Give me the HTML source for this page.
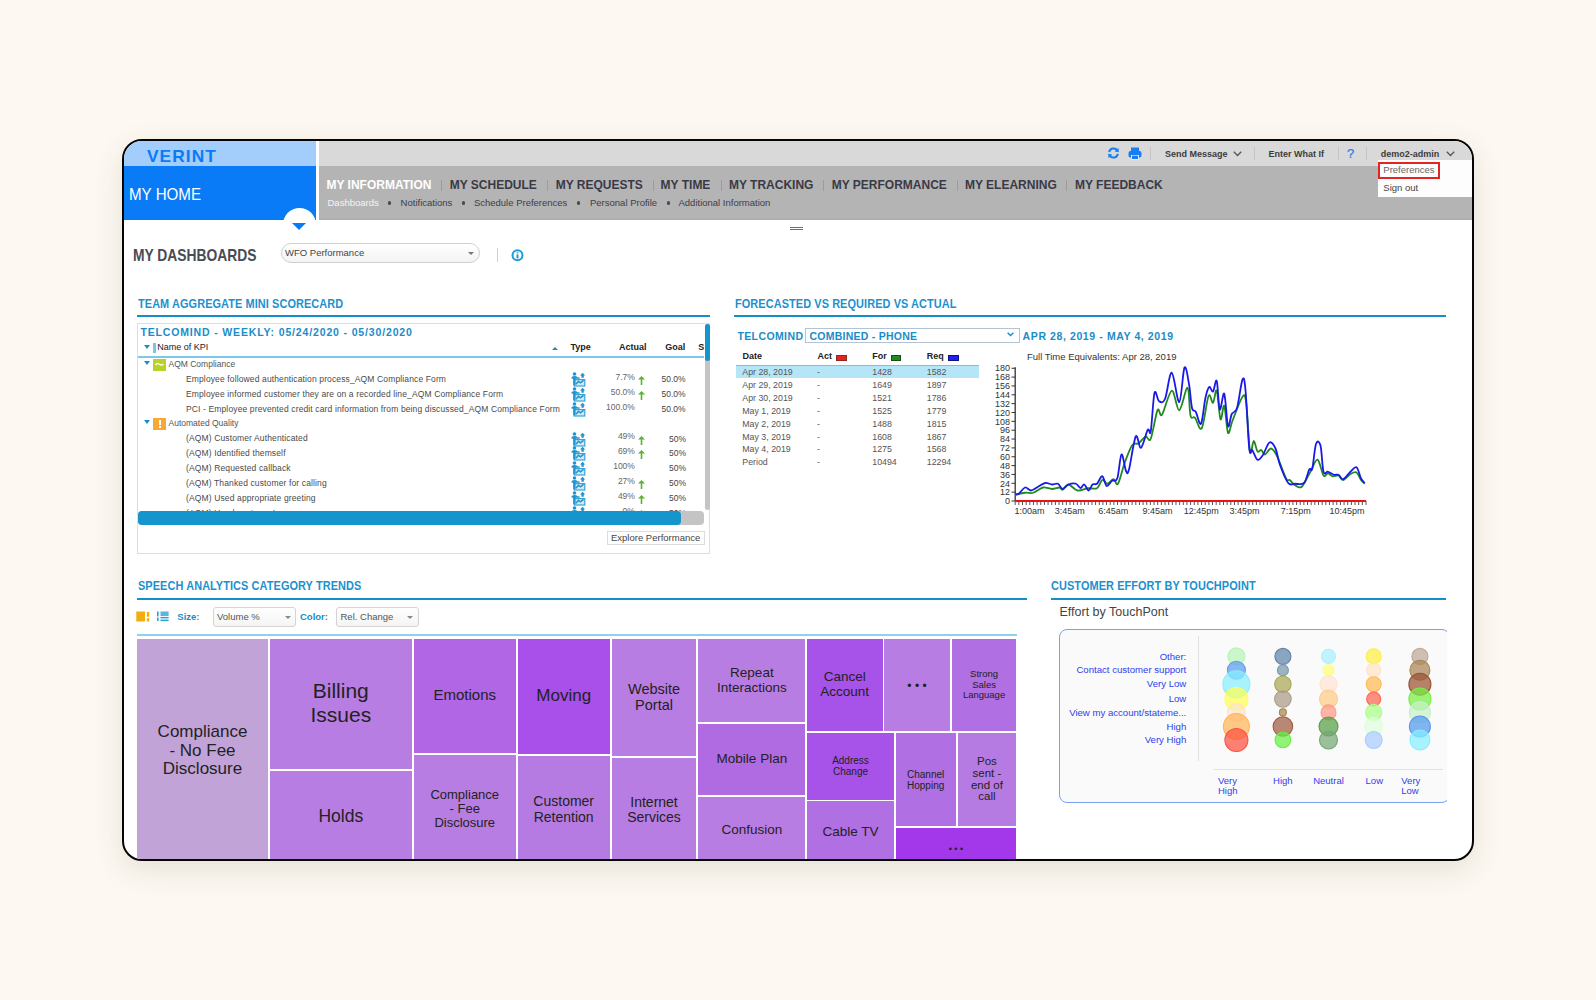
<!DOCTYPE html>
<html><head><meta charset="utf-8">
<style>
*{box-sizing:border-box;margin:0;padding:0}
html,body{width:1596px;height:1000px;overflow:hidden;background:#fdf8f1;font-family:"Liberation Sans",sans-serif}
.a{position:absolute;white-space:nowrap}
#frame{position:absolute;left:122px;top:139px;width:1352px;height:722px;border:2px solid #050505;border-radius:20px;overflow:hidden;background:#fff;box-shadow:0 9px 30px rgba(60,55,35,0.12)}
#in{position:absolute;left:-124px;top:-141px;width:1596px;height:1000px}
svg{position:absolute;overflow:visible}
</style></head><body>
<div id="frame"><div id="in">

<div class="a" style="left:124px;top:141px;width:192px;height:25px;background:#a3cdfa;"></div>
<div class="a" style="left:124px;top:166px;width:192px;height:54px;background:#0a7bf7;"></div>
<div class="a" style="left:319px;top:141px;width:1153px;height:25px;background:#d9d9d9;"></div>
<div class="a" style="left:319px;top:166px;width:1153px;height:54px;background:#b4b4b4;"></div>
<div class="a" style="left:319px;top:217.5px;width:1153px;height:2.5px;background:#aeaeae;"></div>
<div class="a" style="left:282.5px;top:208px;width:33px;height:33px;border-radius:50%;background:#fff"></div>
<div class="a" style="left:292px;top:223px;width:0;height:0;border-left:7.5px solid transparent;border-right:7.5px solid transparent;border-top:7px solid #0a7bf7"></div>
<div class="a" style="left:147px;top:147.99px;font-size:16.2px;line-height:16.2px;color:#0a7bf7;font-weight:bold;letter-spacing:1px;transform:scaleX(1.07);transform-origin:0 0;">VERINT</div>
<div class="a" style="left:129px;top:185.91px;font-size:17px;line-height:17px;color:#fff;font-weight:normal;transform:scaleX(0.89);transform-origin:0 0;">MY HOME</div>
<div class="a" style="left:326.5px;top:178.64px;font-size:12px;line-height:12px;color:#fff;font-weight:bold;">MY INFORMATION</div>
<div class="a" style="left:449.7px;top:178.64px;font-size:12px;line-height:12px;color:#3a3a46;font-weight:bold;">MY SCHEDULE</div>
<div class="a" style="left:555.7px;top:178.64px;font-size:12px;line-height:12px;color:#3a3a46;font-weight:bold;">MY REQUESTS</div>
<div class="a" style="left:660.6px;top:178.64px;font-size:12px;line-height:12px;color:#3a3a46;font-weight:bold;">MY TIME</div>
<div class="a" style="left:729px;top:178.64px;font-size:12px;line-height:12px;color:#3a3a46;font-weight:bold;">MY TRACKING</div>
<div class="a" style="left:831.7px;top:178.64px;font-size:12px;line-height:12px;color:#3a3a46;font-weight:bold;">MY PERFORMANCE</div>
<div class="a" style="left:965px;top:178.64px;font-size:12px;line-height:12px;color:#3a3a46;font-weight:bold;">MY ELEARNING</div>
<div class="a" style="left:1075px;top:178.64px;font-size:12px;line-height:12px;color:#3a3a46;font-weight:bold;">MY FEEDBACK</div>
<div class="a" style="left:441.3px;top:180px;width:1.0px;height:11px;background:#9c9c9c;"></div>
<div class="a" style="left:546.5px;top:180px;width:1.0px;height:11px;background:#9c9c9c;"></div>
<div class="a" style="left:652.5px;top:180px;width:1.0px;height:11px;background:#9c9c9c;"></div>
<div class="a" style="left:720.8px;top:180px;width:1.0px;height:11px;background:#9c9c9c;"></div>
<div class="a" style="left:822.7px;top:180px;width:1.0px;height:11px;background:#9c9c9c;"></div>
<div class="a" style="left:956.6px;top:180px;width:1.0px;height:11px;background:#9c9c9c;"></div>
<div class="a" style="left:1066px;top:180px;width:1px;height:11px;background:#9c9c9c;"></div>
<div class="a" style="left:327.5px;top:197.96px;font-size:9.5px;line-height:9.5px;color:#f4f4f4;font-weight:normal;">Dashboards</div>
<div class="a" style="left:400.6px;top:197.96px;font-size:9.5px;line-height:9.5px;color:#3d3d4a;font-weight:normal;">Notifications</div>
<div class="a" style="left:473.9px;top:197.96px;font-size:9.5px;line-height:9.5px;color:#3d3d4a;font-weight:normal;">Schedule Preferences</div>
<div class="a" style="left:590px;top:197.96px;font-size:9.5px;line-height:9.5px;color:#3d3d4a;font-weight:normal;">Personal Profile</div>
<div class="a" style="left:678.5px;top:197.96px;font-size:9.5px;line-height:9.5px;color:#3d3d4a;font-weight:normal;">Additional Information</div>
<div class="a" style="left:387.5px;top:201.2px;width:3.4px;height:3.4px;border-radius:50%;background:#4a4a55"></div>
<div class="a" style="left:461.5px;top:201.2px;width:3.4px;height:3.4px;border-radius:50%;background:#4a4a55"></div>
<div class="a" style="left:577.1px;top:201.2px;width:3.4px;height:3.4px;border-radius:50%;background:#4a4a55"></div>
<div class="a" style="left:666.5px;top:201.2px;width:3.4px;height:3.4px;border-radius:50%;background:#4a4a55"></div>
<svg style="left:1107px;top:147px" width="13" height="12" viewBox="0 0 13 12">
<path d="M2.2 5.2 A4.4 4.4 0 0 1 10.2 3.4" fill="none" stroke="#1a7ef0" stroke-width="2"/>
<path d="M11.5 0.8 L11.8 5.2 L7.6 4.4 Z" fill="#1a7ef0"/>
<path d="M10.8 6.8 A4.4 4.4 0 0 1 2.8 8.6" fill="none" stroke="#1a7ef0" stroke-width="2"/>
<path d="M1.5 11.2 L1.2 6.8 L5.4 7.6 Z" fill="#1a7ef0"/>
</svg>
<svg style="left:1127.5px;top:147px" width="14" height="13" viewBox="0 0 14 13">
<rect x="3" y="0.5" width="8" height="4" fill="#1a7ef0"/>
<rect x="0.5" y="4" width="13" height="6.5" rx="2" fill="#1a7ef0"/>
<rect x="3" y="8" width="8" height="4.5" fill="#fff"/>
<rect x="3.8" y="8.6" width="6.4" height="3.4" fill="#1a7ef0"/>
</svg>
<div class="a" style="left:1150px;top:147px;width:1px;height:13px;background:#c4c4c4;"></div>
<div class="a" style="left:1165px;top:149.58px;font-size:9px;line-height:9px;color:#3c3c3c;font-weight:bold;">Send Message</div>
<svg style="left:1233px;top:151px" width="9" height="6" viewBox="0 0 9 6"><path d="M0.8 0.8 L4.5 4.5 L8.2 0.8" fill="none" stroke="#555" stroke-width="1.3"/></svg>
<div class="a" style="left:1254px;top:147px;width:1px;height:13px;background:#c4c4c4;"></div>
<div class="a" style="left:1268.5px;top:149.58px;font-size:9px;line-height:9px;color:#3c3c3c;font-weight:bold;">Enter What If</div>
<div class="a" style="left:1338px;top:147px;width:1px;height:13px;background:#c4c4c4;"></div>
<div class="a" style="left:1347px;top:146.60px;font-size:13px;line-height:13px;color:#1a7ef0;font-weight:normal;-webkit-text-stroke:0.2px #1a7ef0;">?</div>
<div class="a" style="left:1366px;top:147px;width:1px;height:13px;background:#c4c4c4;"></div>
<div class="a" style="left:1380.8px;top:149.58px;font-size:9px;line-height:9px;color:#3c3c3c;font-weight:bold;">demo2-admin</div>
<svg style="left:1446px;top:151px" width="9" height="6" viewBox="0 0 9 6"><path d="M0.8 0.8 L4.5 4.5 L8.2 0.8" fill="none" stroke="#555" stroke-width="1.3"/></svg>
<div class="a" style="left:1378px;top:160px;width:94px;height:37px;background:#fdfdfd;"></div>
<div class="a" style="left:1378px;top:161.5px;width:62px;height:17px;border:2px solid #e52421"></div>
<div class="a" style="left:1383.3px;top:165.16px;font-size:9.5px;line-height:9.5px;color:#666;font-weight:normal;">Preferences</div>
<div class="a" style="left:1383.3px;top:183.36px;font-size:9.5px;line-height:9.5px;color:#444;font-weight:normal;">Sign out</div>
<div class="a" style="left:790px;top:227px;width:13px;height:1px;background:#6e6e72;"></div>
<div class="a" style="left:790px;top:229px;width:13px;height:1px;background:#6e6e72;"></div>
<div class="a" style="left:132.5px;top:247.40px;font-size:16.3px;line-height:16.3px;color:#4a4a54;font-weight:bold;transform:scaleX(0.85);transform-origin:0 0;">MY DASHBOARDS</div>
<div class="a" style="left:280.5px;top:242.5px;width:199.5px;height:20px;border:1px solid #cfcfcf;border-radius:10px;background:linear-gradient(#fff,#f3f3f3)"></div>
<div class="a" style="left:285px;top:248.26px;font-size:9.5px;line-height:9.5px;color:#444;font-weight:normal;">WFO Performance</div>
<div class="a" style="left:467.5px;top:252px;width:0;height:0;border-left:3.5px solid transparent;border-right:3.5px solid transparent;border-top:3.5px solid #777"></div>
<div class="a" style="left:496.5px;top:248px;width:1.0px;height:14px;background:#d0d0d0;"></div>
<svg style="left:510.5px;top:249px" width="13" height="13" viewBox="0 0 13 13"><circle cx="6.5" cy="6.3" r="5" fill="none" stroke="#1c9ad4" stroke-width="2"/><rect x="5.5" y="5.4" width="2" height="4" fill="#1c9ad4"/><rect x="5.5" y="3" width="2" height="1.6" fill="#6cc0e8"/></svg>
<div class="a" style="left:138px;top:297.74px;font-size:12px;line-height:12px;color:#1b91cf;font-weight:bold;letter-spacing:0.1px;transform:scaleX(0.91);transform-origin:0 0;">TEAM AGGREGATE MINI SCORECARD</div>
<div class="a" style="left:137px;top:315px;width:573px;height:2px;background:#148fcc;"></div>
<div class="a" style="left:734.8px;top:297.74px;font-size:12px;line-height:12px;color:#1b91cf;font-weight:bold;letter-spacing:0.1px;transform:scaleX(0.91);transform-origin:0 0;">FORECASTED VS REQUIRED VS ACTUAL</div>
<div class="a" style="left:734px;top:315px;width:712px;height:2px;background:#148fcc;"></div>
<div class="a" style="left:137px;top:323px;width:573px;height:231px;border:1px solid #dedede;background:#fff"></div>
<div class="a" style="left:140.4px;top:326.91px;font-size:10.5px;line-height:10.5px;color:#1a8cc8;font-weight:bold;letter-spacing:0.85px;">TELCOMIND - WEEKLY: 05/24/2020 - 05/30/2020</div>
<div class="a" style="left:144px;top:345px;width:0;height:0;border-left:3.5px solid transparent;border-right:3.5px solid transparent;border-top:4px solid #1a8cc8"></div>
<div class="a" style="left:153px;top:343px;width:3px;height:10px;background:#7cc4e8;"></div>
<div class="a" style="left:157.2px;top:342.88px;font-size:9px;line-height:9px;color:#222;font-weight:normal;">Name of KPI</div>
<div class="a" style="left:551.5px;top:346.5px;width:0;height:0;border-left:3.5px solid transparent;border-right:3.5px solid transparent;border-bottom:3.5px solid #1a8cc8"></div>
<div class="a" style="left:570.4px;top:343.38px;font-size:9px;line-height:9px;color:#222;font-weight:bold;">Type</div>
<div class="a" style="left:618.9px;top:343.38px;font-size:9px;line-height:9px;color:#222;font-weight:bold;">Actual</div>
<div class="a" style="left:665.3px;top:343.38px;font-size:9px;line-height:9px;color:#222;font-weight:bold;">Goal</div>
<div class="a" style="left:698.2px;top:343.38px;font-size:9px;line-height:9px;color:#222;font-weight:bold;">S</div>
<div class="a" style="left:138px;top:356px;width:566px;height:2px;background:#7cc8e8;"></div>
<div class="a" style="left:144px;top:361px;width:0;height:0;border-left:3.5px solid transparent;border-right:3.5px solid transparent;border-top:4px solid #1a8cc8"></div>
<div class="a" style="left:153px;top:359px;width:13px;height:12px;background:#b9d22a"></div>
<svg style="left:155px;top:362px" width="9" height="5" viewBox="0 0 9 5"><path d="M0.6 3 Q2.2 0.6 4.5 2.3 Q6.8 4 8.4 1.8" fill="none" stroke="#fff" stroke-width="1.4"/></svg>
<div class="a" style="left:168.5px;top:359.60px;font-size:8.5px;line-height:8.5px;color:#555;font-weight:normal;">AQM Compliance</div>
<div class="a" style="left:186px;top:374.80px;font-size:8.5px;line-height:8.5px;color:#4a4a4a;font-weight:normal;letter-spacing:0.13px;">Employee followed authentication process_AQM Compliance Form</div>
<svg style="left:568px;top:370px" width="22" height="20" viewBox="0 0 22 20">
<rect x="6.2" y="9.6" width="10.6" height="6.4" fill="#d0ebf7" stroke="#3aa2d6" stroke-width="1.2"/>
<circle cx="6.5" cy="4" r="1.8" fill="#1e94d0"/>
<path d="M3.3 8.6 Q3.4 5.9 6.4 5.9 Q8.6 5.9 9.6 7.2 L11.8 7.6 L11.8 8.8 L7.6 8.8 L7.6 15.2 L5.2 15.2 L5.2 8.8 Z" fill="#1e94d0"/>
<path d="M14.6 2.8 L17.2 5.4 L15.8 5.4 L15.8 7.8 L13.4 7.8 L13.4 5.4 L12 5.4 Z" fill="#1e94d0"/>
<path d="M8 14.2 L10.4 11.2 L12.4 12.8 L15.6 10.4" fill="none" stroke="#1e94d0" stroke-width="1.5"/>
</svg>
<div class="a" style="left:-365.1px;width:1000px;text-align:right;top:372.80px;font-size:8.5px;line-height:8.5px;color:#666;font-weight:normal;">7.7%</div>
<svg style="left:638px;top:376px" width="7" height="9" viewBox="0 0 7 9"><path d="M3.5 0 L7 3.6 L4.3 3.6 L4.3 9 L2.7 9 L2.7 3.6 L0 3.6 Z" fill="#5cb232"/></svg>
<div class="a" style="left:661.5px;top:375.00px;font-size:8.5px;line-height:8.5px;color:#444;font-weight:normal;">50.0%</div>
<div class="a" style="left:186px;top:389.80px;font-size:8.5px;line-height:8.5px;color:#4a4a4a;font-weight:normal;letter-spacing:0.13px;">Employee informed customer they are on a recorded line_AQM Compliance Form</div>
<svg style="left:568px;top:385px" width="22" height="20" viewBox="0 0 22 20">
<rect x="6.2" y="9.6" width="10.6" height="6.4" fill="#d0ebf7" stroke="#3aa2d6" stroke-width="1.2"/>
<circle cx="6.5" cy="4" r="1.8" fill="#1e94d0"/>
<path d="M3.3 8.6 Q3.4 5.9 6.4 5.9 Q8.6 5.9 9.6 7.2 L11.8 7.6 L11.8 8.8 L7.6 8.8 L7.6 15.2 L5.2 15.2 L5.2 8.8 Z" fill="#1e94d0"/>
<path d="M14.6 2.8 L17.2 5.4 L15.8 5.4 L15.8 7.8 L13.4 7.8 L13.4 5.4 L12 5.4 Z" fill="#1e94d0"/>
<path d="M8 14.2 L10.4 11.2 L12.4 12.8 L15.6 10.4" fill="none" stroke="#1e94d0" stroke-width="1.5"/>
</svg>
<div class="a" style="left:-365.1px;width:1000px;text-align:right;top:387.80px;font-size:8.5px;line-height:8.5px;color:#666;font-weight:normal;">50.0%</div>
<svg style="left:638px;top:391px" width="7" height="9" viewBox="0 0 7 9"><path d="M3.5 0 L7 3.6 L4.3 3.6 L4.3 9 L2.7 9 L2.7 3.6 L0 3.6 Z" fill="#5cb232"/></svg>
<div class="a" style="left:661.5px;top:390.00px;font-size:8.5px;line-height:8.5px;color:#444;font-weight:normal;">50.0%</div>
<div class="a" style="left:186px;top:404.80px;font-size:8.5px;line-height:8.5px;color:#4a4a4a;font-weight:normal;letter-spacing:0.13px;">PCI - Employee prevented credit card information from being discussed_AQM Compliance Form</div>
<svg style="left:568px;top:400px" width="22" height="20" viewBox="0 0 22 20">
<rect x="6.2" y="9.6" width="10.6" height="6.4" fill="#d0ebf7" stroke="#3aa2d6" stroke-width="1.2"/>
<circle cx="6.5" cy="4" r="1.8" fill="#1e94d0"/>
<path d="M3.3 8.6 Q3.4 5.9 6.4 5.9 Q8.6 5.9 9.6 7.2 L11.8 7.6 L11.8 8.8 L7.6 8.8 L7.6 15.2 L5.2 15.2 L5.2 8.8 Z" fill="#1e94d0"/>
<path d="M14.6 2.8 L17.2 5.4 L15.8 5.4 L15.8 7.8 L13.4 7.8 L13.4 5.4 L12 5.4 Z" fill="#1e94d0"/>
<path d="M8 14.2 L10.4 11.2 L12.4 12.8 L15.6 10.4" fill="none" stroke="#1e94d0" stroke-width="1.5"/>
</svg>
<div class="a" style="left:-365.1px;width:1000px;text-align:right;top:402.80px;font-size:8.5px;line-height:8.5px;color:#666;font-weight:normal;">100.0%</div>
<div class="a" style="left:661.5px;top:405.00px;font-size:8.5px;line-height:8.5px;color:#444;font-weight:normal;">50.0%</div>
<div class="a" style="left:144px;top:420px;width:0;height:0;border-left:3.5px solid transparent;border-right:3.5px solid transparent;border-top:4px solid #1a8cc8"></div>
<div class="a" style="left:153px;top:417.5px;width:13px;height:12.5px;background:#f9a834"></div>
<div class="a" style="left:158.5px;top:419.5px;width:2px;height:5.5px;background:#fff"></div>
<div class="a" style="left:158.5px;top:426px;width:2px;height:2px;background:#fff"></div>
<div class="a" style="left:168.5px;top:418.80px;font-size:8.5px;line-height:8.5px;color:#555;font-weight:normal;">Automated Quality</div>
<div class="a" style="left:186px;top:434.30px;font-size:8.5px;line-height:8.5px;color:#4a4a4a;font-weight:normal;letter-spacing:0.13px;">(AQM) Customer Authenticated</div>
<svg style="left:568px;top:429.5px" width="22" height="20" viewBox="0 0 22 20">
<rect x="6.2" y="9.6" width="10.6" height="6.4" fill="#d0ebf7" stroke="#3aa2d6" stroke-width="1.2"/>
<circle cx="6.5" cy="4" r="1.8" fill="#1e94d0"/>
<path d="M3.3 8.6 Q3.4 5.9 6.4 5.9 Q8.6 5.9 9.6 7.2 L11.8 7.6 L11.8 8.8 L7.6 8.8 L7.6 15.2 L5.2 15.2 L5.2 8.8 Z" fill="#1e94d0"/>
<path d="M14.6 2.8 L17.2 5.4 L15.8 5.4 L15.8 7.8 L13.4 7.8 L13.4 5.4 L12 5.4 Z" fill="#1e94d0"/>
<path d="M8 14.2 L10.4 11.2 L12.4 12.8 L15.6 10.4" fill="none" stroke="#1e94d0" stroke-width="1.5"/>
</svg>
<div class="a" style="left:-365.1px;width:1000px;text-align:right;top:432.30px;font-size:8.5px;line-height:8.5px;color:#666;font-weight:normal;">49%</div>
<svg style="left:638px;top:435.5px" width="7" height="9" viewBox="0 0 7 9"><path d="M3.5 0 L7 3.6 L4.3 3.6 L4.3 9 L2.7 9 L2.7 3.6 L0 3.6 Z" fill="#5cb232"/></svg>
<div class="a" style="left:669px;top:434.50px;font-size:8.5px;line-height:8.5px;color:#444;font-weight:normal;">50%</div>
<div class="a" style="left:186px;top:449.20px;font-size:8.5px;line-height:8.5px;color:#4a4a4a;font-weight:normal;letter-spacing:0.13px;">(AQM) Identified themself</div>
<svg style="left:568px;top:444.4px" width="22" height="20" viewBox="0 0 22 20">
<rect x="6.2" y="9.6" width="10.6" height="6.4" fill="#d0ebf7" stroke="#3aa2d6" stroke-width="1.2"/>
<circle cx="6.5" cy="4" r="1.8" fill="#1e94d0"/>
<path d="M3.3 8.6 Q3.4 5.9 6.4 5.9 Q8.6 5.9 9.6 7.2 L11.8 7.6 L11.8 8.8 L7.6 8.8 L7.6 15.2 L5.2 15.2 L5.2 8.8 Z" fill="#1e94d0"/>
<path d="M14.6 2.8 L17.2 5.4 L15.8 5.4 L15.8 7.8 L13.4 7.8 L13.4 5.4 L12 5.4 Z" fill="#1e94d0"/>
<path d="M8 14.2 L10.4 11.2 L12.4 12.8 L15.6 10.4" fill="none" stroke="#1e94d0" stroke-width="1.5"/>
</svg>
<div class="a" style="left:-365.1px;width:1000px;text-align:right;top:447.20px;font-size:8.5px;line-height:8.5px;color:#666;font-weight:normal;">69%</div>
<svg style="left:638px;top:450.4px" width="7" height="9" viewBox="0 0 7 9"><path d="M3.5 0 L7 3.6 L4.3 3.6 L4.3 9 L2.7 9 L2.7 3.6 L0 3.6 Z" fill="#5cb232"/></svg>
<div class="a" style="left:669px;top:449.40px;font-size:8.5px;line-height:8.5px;color:#444;font-weight:normal;">50%</div>
<div class="a" style="left:186px;top:464.10px;font-size:8.5px;line-height:8.5px;color:#4a4a4a;font-weight:normal;letter-spacing:0.13px;">(AQM) Requested callback</div>
<svg style="left:568px;top:459.3px" width="22" height="20" viewBox="0 0 22 20">
<rect x="6.2" y="9.6" width="10.6" height="6.4" fill="#d0ebf7" stroke="#3aa2d6" stroke-width="1.2"/>
<circle cx="6.5" cy="4" r="1.8" fill="#1e94d0"/>
<path d="M3.3 8.6 Q3.4 5.9 6.4 5.9 Q8.6 5.9 9.6 7.2 L11.8 7.6 L11.8 8.8 L7.6 8.8 L7.6 15.2 L5.2 15.2 L5.2 8.8 Z" fill="#1e94d0"/>
<path d="M14.6 2.8 L17.2 5.4 L15.8 5.4 L15.8 7.8 L13.4 7.8 L13.4 5.4 L12 5.4 Z" fill="#1e94d0"/>
<path d="M8 14.2 L10.4 11.2 L12.4 12.8 L15.6 10.4" fill="none" stroke="#1e94d0" stroke-width="1.5"/>
</svg>
<div class="a" style="left:-365.1px;width:1000px;text-align:right;top:462.10px;font-size:8.5px;line-height:8.5px;color:#666;font-weight:normal;">100%</div>
<div class="a" style="left:669px;top:464.30px;font-size:8.5px;line-height:8.5px;color:#444;font-weight:normal;">50%</div>
<div class="a" style="left:186px;top:479.00px;font-size:8.5px;line-height:8.5px;color:#4a4a4a;font-weight:normal;letter-spacing:0.13px;">(AQM) Thanked customer for calling</div>
<svg style="left:568px;top:474.2px" width="22" height="20" viewBox="0 0 22 20">
<rect x="6.2" y="9.6" width="10.6" height="6.4" fill="#d0ebf7" stroke="#3aa2d6" stroke-width="1.2"/>
<circle cx="6.5" cy="4" r="1.8" fill="#1e94d0"/>
<path d="M3.3 8.6 Q3.4 5.9 6.4 5.9 Q8.6 5.9 9.6 7.2 L11.8 7.6 L11.8 8.8 L7.6 8.8 L7.6 15.2 L5.2 15.2 L5.2 8.8 Z" fill="#1e94d0"/>
<path d="M14.6 2.8 L17.2 5.4 L15.8 5.4 L15.8 7.8 L13.4 7.8 L13.4 5.4 L12 5.4 Z" fill="#1e94d0"/>
<path d="M8 14.2 L10.4 11.2 L12.4 12.8 L15.6 10.4" fill="none" stroke="#1e94d0" stroke-width="1.5"/>
</svg>
<div class="a" style="left:-365.1px;width:1000px;text-align:right;top:477.00px;font-size:8.5px;line-height:8.5px;color:#666;font-weight:normal;">27%</div>
<svg style="left:638px;top:480.2px" width="7" height="9" viewBox="0 0 7 9"><path d="M3.5 0 L7 3.6 L4.3 3.6 L4.3 9 L2.7 9 L2.7 3.6 L0 3.6 Z" fill="#5cb232"/></svg>
<div class="a" style="left:669px;top:479.20px;font-size:8.5px;line-height:8.5px;color:#444;font-weight:normal;">50%</div>
<div class="a" style="left:186px;top:493.90px;font-size:8.5px;line-height:8.5px;color:#4a4a4a;font-weight:normal;letter-spacing:0.13px;">(AQM) Used appropriate greeting</div>
<svg style="left:568px;top:489.1px" width="22" height="20" viewBox="0 0 22 20">
<rect x="6.2" y="9.6" width="10.6" height="6.4" fill="#d0ebf7" stroke="#3aa2d6" stroke-width="1.2"/>
<circle cx="6.5" cy="4" r="1.8" fill="#1e94d0"/>
<path d="M3.3 8.6 Q3.4 5.9 6.4 5.9 Q8.6 5.9 9.6 7.2 L11.8 7.6 L11.8 8.8 L7.6 8.8 L7.6 15.2 L5.2 15.2 L5.2 8.8 Z" fill="#1e94d0"/>
<path d="M14.6 2.8 L17.2 5.4 L15.8 5.4 L15.8 7.8 L13.4 7.8 L13.4 5.4 L12 5.4 Z" fill="#1e94d0"/>
<path d="M8 14.2 L10.4 11.2 L12.4 12.8 L15.6 10.4" fill="none" stroke="#1e94d0" stroke-width="1.5"/>
</svg>
<div class="a" style="left:-365.1px;width:1000px;text-align:right;top:491.90px;font-size:8.5px;line-height:8.5px;color:#666;font-weight:normal;">49%</div>
<svg style="left:638px;top:495.1px" width="7" height="9" viewBox="0 0 7 9"><path d="M3.5 0 L7 3.6 L4.3 3.6 L4.3 9 L2.7 9 L2.7 3.6 L0 3.6 Z" fill="#5cb232"/></svg>
<div class="a" style="left:669px;top:494.10px;font-size:8.5px;line-height:8.5px;color:#444;font-weight:normal;">50%</div>
<div class="a" style="left:186px;top:508.80px;font-size:8.5px;line-height:8.5px;color:#4a4a4a;font-weight:normal;letter-spacing:0.13px;">(AQM) Used customer's name</div>
<svg style="left:568px;top:504.0px" width="22" height="20" viewBox="0 0 22 20">
<rect x="6.2" y="9.6" width="10.6" height="6.4" fill="#d0ebf7" stroke="#3aa2d6" stroke-width="1.2"/>
<circle cx="6.5" cy="4" r="1.8" fill="#1e94d0"/>
<path d="M3.3 8.6 Q3.4 5.9 6.4 5.9 Q8.6 5.9 9.6 7.2 L11.8 7.6 L11.8 8.8 L7.6 8.8 L7.6 15.2 L5.2 15.2 L5.2 8.8 Z" fill="#1e94d0"/>
<path d="M14.6 2.8 L17.2 5.4 L15.8 5.4 L15.8 7.8 L13.4 7.8 L13.4 5.4 L12 5.4 Z" fill="#1e94d0"/>
<path d="M8 14.2 L10.4 11.2 L12.4 12.8 L15.6 10.4" fill="none" stroke="#1e94d0" stroke-width="1.5"/>
</svg>
<div class="a" style="left:-365.1px;width:1000px;text-align:right;top:506.80px;font-size:8.5px;line-height:8.5px;color:#666;font-weight:normal;">0%</div>
<svg style="left:638px;top:510.0px" width="7" height="9" viewBox="0 0 7 9"><path d="M3.5 0 L7 3.6 L4.3 3.6 L4.3 9 L2.7 9 L2.7 3.6 L0 3.6 Z" fill="#5cb232"/></svg>
<div class="a" style="left:669px;top:509.00px;font-size:8.5px;line-height:8.5px;color:#444;font-weight:normal;">50%</div>
<div class="a" style="left:138px;top:511px;width:566px;height:14px;border-radius:4px;background:#c4c4c4"></div>
<div class="a" style="left:138px;top:511px;width:543px;height:14px;border-radius:4px;background:#1496cc"></div>
<div class="a" style="left:704.5px;top:323.5px;width:5px;height:186px;border-radius:3px;background:#c4c4c4"></div>
<div class="a" style="left:704.5px;top:323.5px;width:5px;height:37px;border-radius:3px;background:#1496cc"></div>
<div class="a" style="left:606.5px;top:530.5px;width:98px;height:14px;border:1px solid #dcdcdc;background:#fff"></div>
<div class="a" style="left:611px;top:532.56px;font-size:9.5px;line-height:9.5px;color:#444;font-weight:normal;">Explore Performance</div>
<div class="a" style="left:737.4px;top:330.91px;font-size:10.5px;line-height:10.5px;color:#1a8cc8;font-weight:bold;letter-spacing:0.4px;">TELCOMIND</div>
<div class="a" style="left:805px;top:327.5px;width:214.5px;height:15px;border:1.5px solid #b3c3d3;background:#fff"></div>
<div class="a" style="left:809.5px;top:330.91px;font-size:10.5px;line-height:10.5px;color:#1a8cc8;font-weight:bold;letter-spacing:0.25px;">COMBINED - PHONE</div>
<svg style="left:1007px;top:332px" width="7" height="5" viewBox="0 0 7 5"><path d="M0.6 0.8 L3.5 3.6 L6.4 0.8" fill="none" stroke="#1a8cc8" stroke-width="1.4"/></svg>
<div class="a" style="left:1022.6px;top:330.91px;font-size:10.5px;line-height:10.5px;color:#1a8cc8;font-weight:bold;letter-spacing:0.6px;">APR 28, 2019 - MAY 4, 2019</div>
<div class="a" style="left:742.5px;top:352.38px;font-size:9px;line-height:9px;color:#222;font-weight:bold;">Date</div>
<div class="a" style="left:817.5px;top:352.38px;font-size:9px;line-height:9px;color:#222;font-weight:bold;">Act</div>
<div class="a" style="left:836px;top:355px;width:10.5px;height:5.5px;background:#e82020;border:1px solid #8a2a20;"></div>
<div class="a" style="left:872.3px;top:352.38px;font-size:9px;line-height:9px;color:#222;font-weight:bold;">For</div>
<div class="a" style="left:890.5px;top:355px;width:10.5px;height:5.5px;background:#1e8a1e;border:1px solid #1a4a1a;"></div>
<div class="a" style="left:926.8px;top:352.38px;font-size:9px;line-height:9px;color:#222;font-weight:bold;">Req</div>
<div class="a" style="left:948px;top:355px;width:10.5px;height:5.5px;background:#2020f0;border:1px solid #101080;"></div>
<div class="a" style="left:736.4px;top:365px;width:242.80000000000007px;height:13.399999999999977px;background:#b5e6f8;border-top:1px solid #6fc4ec;"></div>
<div class="a" style="left:742.3px;top:368.05px;font-size:8.8px;line-height:8.8px;color:#555;font-weight:normal;">Apr 28, 2019</div>
<div class="a" style="left:817px;top:368.05px;font-size:8.8px;line-height:8.8px;color:#555;font-weight:normal;">-</div>
<div class="a" style="left:872.3px;top:368.05px;font-size:8.8px;line-height:8.8px;color:#555;font-weight:normal;">1428</div>
<div class="a" style="left:926.8px;top:368.05px;font-size:8.8px;line-height:8.8px;color:#555;font-weight:normal;">1582</div>
<div class="a" style="left:742.3px;top:380.95px;font-size:8.8px;line-height:8.8px;color:#555;font-weight:normal;">Apr 29, 2019</div>
<div class="a" style="left:817px;top:380.95px;font-size:8.8px;line-height:8.8px;color:#555;font-weight:normal;">-</div>
<div class="a" style="left:872.3px;top:380.95px;font-size:8.8px;line-height:8.8px;color:#555;font-weight:normal;">1649</div>
<div class="a" style="left:926.8px;top:380.95px;font-size:8.8px;line-height:8.8px;color:#555;font-weight:normal;">1897</div>
<div class="a" style="left:742.3px;top:393.85px;font-size:8.8px;line-height:8.8px;color:#555;font-weight:normal;">Apr 30, 2019</div>
<div class="a" style="left:817px;top:393.85px;font-size:8.8px;line-height:8.8px;color:#555;font-weight:normal;">-</div>
<div class="a" style="left:872.3px;top:393.85px;font-size:8.8px;line-height:8.8px;color:#555;font-weight:normal;">1521</div>
<div class="a" style="left:926.8px;top:393.85px;font-size:8.8px;line-height:8.8px;color:#555;font-weight:normal;">1786</div>
<div class="a" style="left:742.3px;top:406.75px;font-size:8.8px;line-height:8.8px;color:#555;font-weight:normal;">May 1, 2019</div>
<div class="a" style="left:817px;top:406.75px;font-size:8.8px;line-height:8.8px;color:#555;font-weight:normal;">-</div>
<div class="a" style="left:872.3px;top:406.75px;font-size:8.8px;line-height:8.8px;color:#555;font-weight:normal;">1525</div>
<div class="a" style="left:926.8px;top:406.75px;font-size:8.8px;line-height:8.8px;color:#555;font-weight:normal;">1779</div>
<div class="a" style="left:742.3px;top:419.65px;font-size:8.8px;line-height:8.8px;color:#555;font-weight:normal;">May 2, 2019</div>
<div class="a" style="left:817px;top:419.65px;font-size:8.8px;line-height:8.8px;color:#555;font-weight:normal;">-</div>
<div class="a" style="left:872.3px;top:419.65px;font-size:8.8px;line-height:8.8px;color:#555;font-weight:normal;">1488</div>
<div class="a" style="left:926.8px;top:419.65px;font-size:8.8px;line-height:8.8px;color:#555;font-weight:normal;">1815</div>
<div class="a" style="left:742.3px;top:432.55px;font-size:8.8px;line-height:8.8px;color:#555;font-weight:normal;">May 3, 2019</div>
<div class="a" style="left:817px;top:432.55px;font-size:8.8px;line-height:8.8px;color:#555;font-weight:normal;">-</div>
<div class="a" style="left:872.3px;top:432.55px;font-size:8.8px;line-height:8.8px;color:#555;font-weight:normal;">1608</div>
<div class="a" style="left:926.8px;top:432.55px;font-size:8.8px;line-height:8.8px;color:#555;font-weight:normal;">1867</div>
<div class="a" style="left:742.3px;top:445.45px;font-size:8.8px;line-height:8.8px;color:#555;font-weight:normal;">May 4, 2019</div>
<div class="a" style="left:817px;top:445.45px;font-size:8.8px;line-height:8.8px;color:#555;font-weight:normal;">-</div>
<div class="a" style="left:872.3px;top:445.45px;font-size:8.8px;line-height:8.8px;color:#555;font-weight:normal;">1275</div>
<div class="a" style="left:926.8px;top:445.45px;font-size:8.8px;line-height:8.8px;color:#555;font-weight:normal;">1568</div>
<div class="a" style="left:742.3px;top:458.35px;font-size:8.8px;line-height:8.8px;color:#555;font-weight:normal;">Period</div>
<div class="a" style="left:817px;top:458.35px;font-size:8.8px;line-height:8.8px;color:#555;font-weight:normal;">-</div>
<div class="a" style="left:872.3px;top:458.35px;font-size:8.8px;line-height:8.8px;color:#555;font-weight:normal;">10494</div>
<div class="a" style="left:926.8px;top:458.35px;font-size:8.8px;line-height:8.8px;color:#555;font-weight:normal;">12294</div>
<div class="a" style="left:1027px;top:351.96px;font-size:9.5px;line-height:9.5px;color:#333;font-weight:normal;">Full Time Equivalents: Apr 28, 2019</div>
<svg style="left:0;top:0" width="1596" height="1000" viewBox="0 0 1596 1000"><path d="M1015.2 367.25 L1015.2 501.0" stroke="#333" stroke-width="1.3"/><path d="M1011.5 501.00 L1015.2 501.00" stroke="#333" stroke-width="1"/><text x="1010" y="504.20" font-size="9" text-anchor="end" fill="#333" font-family="Liberation Sans">0</text><path d="M1011.5 492.15 L1015.2 492.15" stroke="#333" stroke-width="1"/><text x="1010" y="495.35" font-size="9" text-anchor="end" fill="#333" font-family="Liberation Sans">12</text><path d="M1011.5 483.30 L1015.2 483.30" stroke="#333" stroke-width="1"/><text x="1010" y="486.50" font-size="9" text-anchor="end" fill="#333" font-family="Liberation Sans">24</text><path d="M1011.5 474.45 L1015.2 474.45" stroke="#333" stroke-width="1"/><text x="1010" y="477.65" font-size="9" text-anchor="end" fill="#333" font-family="Liberation Sans">36</text><path d="M1011.5 465.60 L1015.2 465.60" stroke="#333" stroke-width="1"/><text x="1010" y="468.80" font-size="9" text-anchor="end" fill="#333" font-family="Liberation Sans">48</text><path d="M1011.5 456.75 L1015.2 456.75" stroke="#333" stroke-width="1"/><text x="1010" y="459.95" font-size="9" text-anchor="end" fill="#333" font-family="Liberation Sans">60</text><path d="M1011.5 447.90 L1015.2 447.90" stroke="#333" stroke-width="1"/><text x="1010" y="451.10" font-size="9" text-anchor="end" fill="#333" font-family="Liberation Sans">72</text><path d="M1011.5 439.05 L1015.2 439.05" stroke="#333" stroke-width="1"/><text x="1010" y="442.25" font-size="9" text-anchor="end" fill="#333" font-family="Liberation Sans">84</text><path d="M1011.5 430.20 L1015.2 430.20" stroke="#333" stroke-width="1"/><text x="1010" y="433.40" font-size="9" text-anchor="end" fill="#333" font-family="Liberation Sans">96</text><path d="M1011.5 421.35 L1015.2 421.35" stroke="#333" stroke-width="1"/><text x="1010" y="424.55" font-size="9" text-anchor="end" fill="#333" font-family="Liberation Sans">108</text><path d="M1011.5 412.50 L1015.2 412.50" stroke="#333" stroke-width="1"/><text x="1010" y="415.70" font-size="9" text-anchor="end" fill="#333" font-family="Liberation Sans">120</text><path d="M1011.5 403.65 L1015.2 403.65" stroke="#333" stroke-width="1"/><text x="1010" y="406.85" font-size="9" text-anchor="end" fill="#333" font-family="Liberation Sans">132</text><path d="M1011.5 394.80 L1015.2 394.80" stroke="#333" stroke-width="1"/><text x="1010" y="398.00" font-size="9" text-anchor="end" fill="#333" font-family="Liberation Sans">144</text><path d="M1011.5 385.95 L1015.2 385.95" stroke="#333" stroke-width="1"/><text x="1010" y="389.15" font-size="9" text-anchor="end" fill="#333" font-family="Liberation Sans">156</text><path d="M1011.5 377.10 L1015.2 377.10" stroke="#333" stroke-width="1"/><text x="1010" y="380.30" font-size="9" text-anchor="end" fill="#333" font-family="Liberation Sans">168</text><path d="M1011.5 368.25 L1015.2 368.25" stroke="#333" stroke-width="1"/><text x="1010" y="371.45" font-size="9" text-anchor="end" fill="#333" font-family="Liberation Sans">180</text><path d="M1015.20 501.0 L1015.20 505.0" stroke="#444" stroke-width="0.9"/><path d="M1018.85 501.0 L1018.85 505.0" stroke="#444" stroke-width="0.9"/><path d="M1022.51 501.0 L1022.51 505.0" stroke="#444" stroke-width="0.9"/><path d="M1026.16 501.0 L1026.16 505.0" stroke="#444" stroke-width="0.9"/><path d="M1029.82 501.0 L1029.82 505.0" stroke="#444" stroke-width="0.9"/><path d="M1033.47 501.0 L1033.47 505.0" stroke="#444" stroke-width="0.9"/><path d="M1037.12 501.0 L1037.12 505.0" stroke="#444" stroke-width="0.9"/><path d="M1040.78 501.0 L1040.78 505.0" stroke="#444" stroke-width="0.9"/><path d="M1044.43 501.0 L1044.43 505.0" stroke="#444" stroke-width="0.9"/><path d="M1048.09 501.0 L1048.09 505.0" stroke="#444" stroke-width="0.9"/><path d="M1051.74 501.0 L1051.74 505.0" stroke="#444" stroke-width="0.9"/><path d="M1055.40 501.0 L1055.40 505.0" stroke="#444" stroke-width="0.9"/><path d="M1059.05 501.0 L1059.05 505.0" stroke="#444" stroke-width="0.9"/><path d="M1062.70 501.0 L1062.70 505.0" stroke="#444" stroke-width="0.9"/><path d="M1066.36 501.0 L1066.36 505.0" stroke="#444" stroke-width="0.9"/><path d="M1070.01 501.0 L1070.01 505.0" stroke="#444" stroke-width="0.9"/><path d="M1073.67 501.0 L1073.67 505.0" stroke="#444" stroke-width="0.9"/><path d="M1077.32 501.0 L1077.32 505.0" stroke="#444" stroke-width="0.9"/><path d="M1080.98 501.0 L1080.98 505.0" stroke="#444" stroke-width="0.9"/><path d="M1084.63 501.0 L1084.63 505.0" stroke="#444" stroke-width="0.9"/><path d="M1088.28 501.0 L1088.28 505.0" stroke="#444" stroke-width="0.9"/><path d="M1091.94 501.0 L1091.94 505.0" stroke="#444" stroke-width="0.9"/><path d="M1095.59 501.0 L1095.59 505.0" stroke="#444" stroke-width="0.9"/><path d="M1099.25 501.0 L1099.25 505.0" stroke="#444" stroke-width="0.9"/><path d="M1102.90 501.0 L1102.90 505.0" stroke="#444" stroke-width="0.9"/><path d="M1106.55 501.0 L1106.55 505.0" stroke="#444" stroke-width="0.9"/><path d="M1110.21 501.0 L1110.21 505.0" stroke="#444" stroke-width="0.9"/><path d="M1113.86 501.0 L1113.86 505.0" stroke="#444" stroke-width="0.9"/><path d="M1117.52 501.0 L1117.52 505.0" stroke="#444" stroke-width="0.9"/><path d="M1121.17 501.0 L1121.17 505.0" stroke="#444" stroke-width="0.9"/><path d="M1124.83 501.0 L1124.83 505.0" stroke="#444" stroke-width="0.9"/><path d="M1128.48 501.0 L1128.48 505.0" stroke="#444" stroke-width="0.9"/><path d="M1132.13 501.0 L1132.13 505.0" stroke="#444" stroke-width="0.9"/><path d="M1135.79 501.0 L1135.79 505.0" stroke="#444" stroke-width="0.9"/><path d="M1139.44 501.0 L1139.44 505.0" stroke="#444" stroke-width="0.9"/><path d="M1143.10 501.0 L1143.10 505.0" stroke="#444" stroke-width="0.9"/><path d="M1146.75 501.0 L1146.75 505.0" stroke="#444" stroke-width="0.9"/><path d="M1150.40 501.0 L1150.40 505.0" stroke="#444" stroke-width="0.9"/><path d="M1154.06 501.0 L1154.06 505.0" stroke="#444" stroke-width="0.9"/><path d="M1157.71 501.0 L1157.71 505.0" stroke="#444" stroke-width="0.9"/><path d="M1161.37 501.0 L1161.37 505.0" stroke="#444" stroke-width="0.9"/><path d="M1165.02 501.0 L1165.02 505.0" stroke="#444" stroke-width="0.9"/><path d="M1168.67 501.0 L1168.67 505.0" stroke="#444" stroke-width="0.9"/><path d="M1172.33 501.0 L1172.33 505.0" stroke="#444" stroke-width="0.9"/><path d="M1175.98 501.0 L1175.98 505.0" stroke="#444" stroke-width="0.9"/><path d="M1179.64 501.0 L1179.64 505.0" stroke="#444" stroke-width="0.9"/><path d="M1183.29 501.0 L1183.29 505.0" stroke="#444" stroke-width="0.9"/><path d="M1186.95 501.0 L1186.95 505.0" stroke="#444" stroke-width="0.9"/><path d="M1190.60 501.0 L1190.60 505.0" stroke="#444" stroke-width="0.9"/><path d="M1194.25 501.0 L1194.25 505.0" stroke="#444" stroke-width="0.9"/><path d="M1197.91 501.0 L1197.91 505.0" stroke="#444" stroke-width="0.9"/><path d="M1201.56 501.0 L1201.56 505.0" stroke="#444" stroke-width="0.9"/><path d="M1205.22 501.0 L1205.22 505.0" stroke="#444" stroke-width="0.9"/><path d="M1208.87 501.0 L1208.87 505.0" stroke="#444" stroke-width="0.9"/><path d="M1212.53 501.0 L1212.53 505.0" stroke="#444" stroke-width="0.9"/><path d="M1216.18 501.0 L1216.18 505.0" stroke="#444" stroke-width="0.9"/><path d="M1219.83 501.0 L1219.83 505.0" stroke="#444" stroke-width="0.9"/><path d="M1223.49 501.0 L1223.49 505.0" stroke="#444" stroke-width="0.9"/><path d="M1227.14 501.0 L1227.14 505.0" stroke="#444" stroke-width="0.9"/><path d="M1230.80 501.0 L1230.80 505.0" stroke="#444" stroke-width="0.9"/><path d="M1234.45 501.0 L1234.45 505.0" stroke="#444" stroke-width="0.9"/><path d="M1238.10 501.0 L1238.10 505.0" stroke="#444" stroke-width="0.9"/><path d="M1241.76 501.0 L1241.76 505.0" stroke="#444" stroke-width="0.9"/><path d="M1245.41 501.0 L1245.41 505.0" stroke="#444" stroke-width="0.9"/><path d="M1249.07 501.0 L1249.07 505.0" stroke="#444" stroke-width="0.9"/><path d="M1252.72 501.0 L1252.72 505.0" stroke="#444" stroke-width="0.9"/><path d="M1256.38 501.0 L1256.38 505.0" stroke="#444" stroke-width="0.9"/><path d="M1260.03 501.0 L1260.03 505.0" stroke="#444" stroke-width="0.9"/><path d="M1263.68 501.0 L1263.68 505.0" stroke="#444" stroke-width="0.9"/><path d="M1267.34 501.0 L1267.34 505.0" stroke="#444" stroke-width="0.9"/><path d="M1270.99 501.0 L1270.99 505.0" stroke="#444" stroke-width="0.9"/><path d="M1274.65 501.0 L1274.65 505.0" stroke="#444" stroke-width="0.9"/><path d="M1278.30 501.0 L1278.30 505.0" stroke="#444" stroke-width="0.9"/><path d="M1281.95 501.0 L1281.95 505.0" stroke="#444" stroke-width="0.9"/><path d="M1285.61 501.0 L1285.61 505.0" stroke="#444" stroke-width="0.9"/><path d="M1289.26 501.0 L1289.26 505.0" stroke="#444" stroke-width="0.9"/><path d="M1292.92 501.0 L1292.92 505.0" stroke="#444" stroke-width="0.9"/><path d="M1296.57 501.0 L1296.57 505.0" stroke="#444" stroke-width="0.9"/><path d="M1300.23 501.0 L1300.23 505.0" stroke="#444" stroke-width="0.9"/><path d="M1303.88 501.0 L1303.88 505.0" stroke="#444" stroke-width="0.9"/><path d="M1307.53 501.0 L1307.53 505.0" stroke="#444" stroke-width="0.9"/><path d="M1311.19 501.0 L1311.19 505.0" stroke="#444" stroke-width="0.9"/><path d="M1314.84 501.0 L1314.84 505.0" stroke="#444" stroke-width="0.9"/><path d="M1318.50 501.0 L1318.50 505.0" stroke="#444" stroke-width="0.9"/><path d="M1322.15 501.0 L1322.15 505.0" stroke="#444" stroke-width="0.9"/><path d="M1325.80 501.0 L1325.80 505.0" stroke="#444" stroke-width="0.9"/><path d="M1329.46 501.0 L1329.46 505.0" stroke="#444" stroke-width="0.9"/><path d="M1333.11 501.0 L1333.11 505.0" stroke="#444" stroke-width="0.9"/><path d="M1336.77 501.0 L1336.77 505.0" stroke="#444" stroke-width="0.9"/><path d="M1340.42 501.0 L1340.42 505.0" stroke="#444" stroke-width="0.9"/><path d="M1344.08 501.0 L1344.08 505.0" stroke="#444" stroke-width="0.9"/><path d="M1347.73 501.0 L1347.73 505.0" stroke="#444" stroke-width="0.9"/><path d="M1351.38 501.0 L1351.38 505.0" stroke="#444" stroke-width="0.9"/><path d="M1355.04 501.0 L1355.04 505.0" stroke="#444" stroke-width="0.9"/><path d="M1358.69 501.0 L1358.69 505.0" stroke="#444" stroke-width="0.9"/><path d="M1362.35 501.0 L1362.35 505.0" stroke="#444" stroke-width="0.9"/><path d="M1366.00 501.0 L1366.00 505.0" stroke="#444" stroke-width="0.9"/><path d="M1015.2 501.0 L1366 501.0" stroke="#ee1111" stroke-width="2"/><text x="1029.6" y="513.8" font-size="9" text-anchor="middle" fill="#333" font-family="Liberation Sans">1:00am</text><text x="1069.7" y="513.8" font-size="9" text-anchor="middle" fill="#333" font-family="Liberation Sans">3:45am</text><text x="1113.3" y="513.8" font-size="9" text-anchor="middle" fill="#333" font-family="Liberation Sans">6:45am</text><text x="1157.4" y="513.8" font-size="9" text-anchor="middle" fill="#333" font-family="Liberation Sans">9:45am</text><text x="1201.3" y="513.8" font-size="9" text-anchor="middle" fill="#333" font-family="Liberation Sans">12:45pm</text><text x="1244.4" y="513.8" font-size="9" text-anchor="middle" fill="#333" font-family="Liberation Sans">3:45pm</text><text x="1295.8" y="513.8" font-size="9" text-anchor="middle" fill="#333" font-family="Liberation Sans">7:15pm</text><text x="1347" y="513.8" font-size="9" text-anchor="middle" fill="#333" font-family="Liberation Sans">10:45pm</text><path d="M1015.20 495.00 C1016.83 494.62 1021.99 493.12 1025.00 492.75 C1028.01 492.38 1030.25 493.62 1033.25 492.75 C1036.25 491.88 1039.88 488.12 1043.00 487.50 C1046.12 486.88 1049.25 489.00 1052.00 489.00 C1054.75 489.00 1057.75 487.38 1059.50 487.50 C1061.25 487.62 1061.00 490.25 1062.50 489.75 C1064.00 489.25 1066.00 484.38 1068.50 484.50 C1071.00 484.62 1074.25 489.88 1077.50 490.50 C1080.75 491.12 1084.75 488.62 1088.00 488.25 C1091.25 487.88 1094.62 489.62 1097.00 488.25 C1099.38 486.88 1100.50 480.75 1102.25 480.00 C1104.00 479.25 1105.62 483.88 1107.50 483.75 C1109.38 483.62 1111.75 479.25 1113.50 479.25 C1115.25 479.25 1116.17 486.38 1118.00 483.75 C1119.83 481.12 1122.17 469.88 1124.50 463.50 C1126.83 457.12 1129.62 448.88 1132.00 445.50 C1134.38 442.12 1136.50 444.75 1138.75 443.25 C1141.00 441.75 1143.50 437.25 1145.50 436.50 C1147.50 435.75 1148.75 443.12 1150.75 438.75 C1152.75 434.38 1155.62 414.25 1157.50 410.25 C1159.38 406.25 1159.62 418.00 1162.00 414.75 C1164.38 411.50 1168.88 391.50 1171.75 390.75 C1174.62 390.00 1176.62 410.75 1179.25 410.25 C1181.88 409.75 1185.62 386.88 1187.50 387.75 C1189.38 388.62 1189.25 410.50 1190.50 415.50 C1191.75 420.50 1193.12 415.62 1195.00 417.75 C1196.88 419.88 1199.50 431.88 1201.75 428.25 C1204.00 424.62 1206.62 400.25 1208.50 396.00 C1210.38 391.75 1211.62 403.62 1213.00 402.75 C1214.38 401.88 1215.50 388.00 1216.75 390.75 C1218.00 393.50 1219.25 416.75 1220.50 419.25 C1221.75 421.75 1223.00 403.50 1224.25 405.75 C1225.50 408.00 1226.62 430.25 1228.00 432.75 C1229.38 435.25 1230.08 426.75 1232.50 420.75 C1234.92 414.75 1240.21 399.62 1242.50 396.75 C1244.79 393.88 1245.00 394.38 1246.25 403.50 C1247.50 412.62 1248.75 445.25 1250.00 451.50 C1251.25 457.75 1252.50 441.00 1253.75 441.00 C1255.00 441.00 1256.25 450.00 1257.50 451.50 C1258.75 453.00 1260.00 449.50 1261.25 450.00 C1262.50 450.50 1263.38 454.75 1265.00 454.50 C1266.62 454.25 1269.00 448.25 1271.00 448.50 C1273.00 448.75 1274.50 451.00 1277.00 456.00 C1279.50 461.00 1283.88 474.50 1286.00 478.50 C1288.12 482.50 1288.25 478.88 1289.75 480.00 C1291.25 481.12 1293.00 484.12 1295.00 485.25 C1297.00 486.38 1299.25 488.88 1301.75 486.75 C1304.25 484.62 1307.38 477.00 1310.00 472.50 C1312.62 468.00 1315.25 459.25 1317.50 459.75 C1319.75 460.25 1321.75 473.25 1323.50 475.50 C1325.25 477.75 1326.50 473.12 1328.00 473.25 C1329.50 473.38 1330.75 475.88 1332.50 476.25 C1334.25 476.62 1336.75 474.88 1338.50 475.50 C1340.25 476.12 1341.00 480.25 1343.00 480.00 C1345.00 479.75 1348.25 475.25 1350.50 474.00 C1352.75 472.75 1354.75 471.50 1356.50 472.50 C1358.25 473.50 1359.62 478.12 1361.00 480.00 C1362.38 481.88 1364.12 483.12 1364.75 483.75" fill="none" stroke="#1f8a1f" stroke-width="1.8"/><path d="M1015.20 494.20 C1015.83 494.08 1017.37 494.62 1019.00 493.50 C1020.63 492.38 1023.00 488.00 1025.00 487.50 C1027.00 487.00 1029.00 490.50 1031.00 490.50 C1033.00 490.50 1034.63 488.75 1037.00 487.50 C1039.37 486.25 1042.70 483.50 1045.20 483.00 C1047.70 482.50 1049.87 484.38 1052.00 484.50 C1054.13 484.62 1056.25 483.00 1058.00 483.75 C1059.75 484.50 1060.75 488.88 1062.50 489.00 C1064.25 489.12 1066.25 485.38 1068.50 484.50 C1070.75 483.62 1074.00 483.17 1076.00 483.75 C1078.00 484.33 1079.12 487.88 1080.50 488.00 C1081.88 488.12 1082.88 484.08 1084.25 484.50 C1085.62 484.92 1087.38 490.50 1088.75 490.50 C1090.12 490.50 1091.12 485.62 1092.50 484.50 C1093.88 483.38 1095.38 485.12 1097.00 483.75 C1098.62 482.38 1100.62 475.88 1102.25 476.25 C1103.88 476.62 1105.12 485.25 1106.75 486.00 C1108.38 486.75 1110.25 482.00 1112.00 480.75 C1113.75 479.50 1115.67 482.88 1117.25 478.50 C1118.83 474.12 1120.04 455.75 1121.50 454.50 C1122.96 453.25 1124.75 468.50 1126.00 471.00 C1127.25 473.50 1127.38 475.25 1129.00 469.50 C1130.62 463.75 1133.75 440.12 1135.75 436.50 C1137.75 432.88 1139.00 448.88 1141.00 447.75 C1143.00 446.62 1146.12 432.50 1147.75 429.75 C1149.38 427.00 1149.62 437.38 1150.75 431.25 C1151.88 425.12 1153.12 398.00 1154.50 393.00 C1155.88 388.00 1157.25 400.25 1159.00 401.25 C1160.75 402.25 1162.88 403.75 1165.00 399.00 C1167.12 394.25 1169.38 372.25 1171.75 372.75 C1174.12 373.25 1177.12 402.88 1179.25 402.00 C1181.38 401.12 1182.88 370.50 1184.50 367.50 C1186.12 364.50 1187.75 377.25 1189.00 384.00 C1190.25 390.75 1190.88 403.38 1192.00 408.00 C1193.12 412.62 1194.25 409.12 1195.75 411.75 C1197.25 414.38 1199.38 426.12 1201.00 423.75 C1202.62 421.38 1204.12 403.62 1205.50 397.50 C1206.88 391.38 1208.00 388.00 1209.25 387.00 C1210.50 386.00 1211.75 392.50 1213.00 391.50 C1214.25 390.50 1215.62 378.00 1216.75 381.00 C1217.88 384.00 1218.50 407.38 1219.75 409.50 C1221.00 411.62 1222.88 391.00 1224.25 393.75 C1225.62 396.50 1226.75 422.62 1228.00 426.00 C1229.25 429.38 1230.25 417.00 1231.75 414.00 C1233.25 411.00 1235.21 413.75 1237.00 408.00 C1238.79 402.25 1241.08 382.50 1242.50 379.50 C1243.92 376.50 1244.38 378.50 1245.50 390.00 C1246.62 401.50 1248.12 438.50 1249.25 448.50 C1250.38 458.50 1250.88 448.12 1252.25 450.00 C1253.62 451.88 1255.75 458.88 1257.50 459.75 C1259.25 460.62 1260.75 458.12 1262.75 455.25 C1264.75 452.38 1267.38 443.62 1269.50 442.50 C1271.62 441.38 1273.75 444.75 1275.50 448.50 C1277.25 452.25 1277.88 459.25 1280.00 465.00 C1282.12 470.75 1285.75 479.88 1288.25 483.00 C1290.75 486.12 1292.38 483.75 1295.00 483.75 C1297.62 483.75 1301.62 485.38 1304.00 483.00 C1306.38 480.62 1307.88 471.88 1309.25 469.50 C1310.62 467.12 1311.12 473.00 1312.25 468.75 C1313.38 464.50 1314.62 447.88 1316.00 444.00 C1317.38 440.12 1319.25 440.88 1320.50 445.50 C1321.75 450.12 1322.25 467.38 1323.50 471.75 C1324.75 476.12 1326.25 471.25 1328.00 471.75 C1329.75 472.25 1332.25 474.25 1334.00 474.75 C1335.75 475.25 1337.00 474.00 1338.50 474.75 C1340.00 475.50 1341.00 479.75 1343.00 479.25 C1345.00 478.75 1348.25 473.75 1350.50 471.75 C1352.75 469.75 1354.75 466.12 1356.50 467.25 C1358.25 468.38 1359.62 475.88 1361.00 478.50 C1362.38 481.12 1364.12 482.25 1364.75 483.00" fill="none" stroke="#1a1ae8" stroke-width="1.8"/></svg>
<div class="a" style="left:138px;top:580.24px;font-size:12px;line-height:12px;color:#1b91cf;font-weight:bold;letter-spacing:0.1px;transform:scaleX(0.91);transform-origin:0 0;">SPEECH ANALYTICS CATEGORY TRENDS</div>
<div class="a" style="left:137px;top:597.5px;width:890px;height:2.0px;background:#148fcc;"></div>
<div class="a" style="left:1051px;top:580.24px;font-size:12px;line-height:12px;color:#1b91cf;font-weight:bold;letter-spacing:0.1px;transform:scaleX(0.91);transform-origin:0 0;">CUSTOMER EFFORT BY TOUCHPOINT</div>
<div class="a" style="left:1051px;top:597.5px;width:395px;height:2.0px;background:#148fcc;"></div>
<svg style="left:0;top:0" width="1596" height="1000" viewBox="0 0 1596 1000"><g fill="#f4ad10"><rect x="136.3" y="611.5" width="8.7" height="10"/><rect x="146.8" y="612" width="2.4" height="4.8"/><rect x="146.8" y="618.2" width="2.4" height="3.3"/></g>
<g fill="#2aa0d6"><rect x="157" y="611.5" width="1.6" height="4.8"/><rect x="157" y="617.5" width="1.6" height="3.5"/><rect x="160.5" y="611.5" width="8.1" height="4.6" fill="#5ab6e0"/><rect x="160.5" y="617" width="8.1" height="1.4"/><rect x="160.5" y="619.6" width="8.1" height="1.5"/></g></svg>
<div class="a" style="left:177.3px;top:612.26px;font-size:9.5px;line-height:9.5px;color:#1a8cc8;font-weight:bold;">Size:</div>
<div class="a" style="left:212.5px;top:607px;width:83px;height:19.5px;border:1px solid #d4d4d4;border-radius:3px;background:linear-gradient(#fff,#f4f4f4)"></div>
<div class="a" style="left:217px;top:612.26px;font-size:9.5px;line-height:9.5px;color:#555;font-weight:normal;">Volume %</div>
<div class="a" style="left:284.5px;top:615.5px;width:0;height:0;border-left:3.5px solid transparent;border-right:3.5px solid transparent;border-top:3.5px solid #888"></div>
<div class="a" style="left:300px;top:612.26px;font-size:9.5px;line-height:9.5px;color:#1a8cc8;font-weight:bold;">Color:</div>
<div class="a" style="left:336px;top:607px;width:82.5px;height:19.5px;border:1px solid #d4d4d4;border-radius:3px;background:linear-gradient(#fff,#f4f4f4)"></div>
<div class="a" style="left:340.5px;top:612.26px;font-size:9.5px;line-height:9.5px;color:#555;font-weight:normal;">Rel. Change</div>
<div class="a" style="left:406.5px;top:615.5px;width:0;height:0;border-left:3.5px solid transparent;border-right:3.5px solid transparent;border-top:3.5px solid #888"></div>
<div class="a" style="left:137px;top:634px;width:880px;height:1.5px;background:#8fd0ee;"></div>
<div class="a" style="left:137px;top:639px;width:131.0px;height:224.0px;background:#c2a3d8"></div>
<div class="a" style="left:137px;top:639px;width:131.0px;height:224.0px;display:flex;align-items:center;justify-content:center;text-align:center;white-space:normal;color:#222;font-size:17px;line-height:18.7px">Compliance<br>- No Fee<br>Disclosure</div>
<div class="a" style="left:270px;top:639px;width:141.6px;height:130.0px;background:#b87de2"></div>
<div class="a" style="left:270px;top:637.5px;width:141.6px;height:130.0px;display:flex;align-items:center;justify-content:center;text-align:center;white-space:normal;color:#222;font-size:21px;line-height:23.1px">Billing<br>Issues</div>
<div class="a" style="left:270px;top:771px;width:141.6px;height:92.0px;background:#b87de2"></div>
<div class="a" style="left:270px;top:771px;width:141.6px;height:92.0px;display:flex;align-items:center;justify-content:center;text-align:center;white-space:normal;color:#222;font-size:17.5px;line-height:19.2px">Holds</div>
<div class="a" style="left:413.5px;top:639px;width:102.5px;height:114.0px;background:#b066e5"></div>
<div class="a" style="left:413.5px;top:637.8px;width:102.5px;height:114.0px;display:flex;align-items:center;justify-content:center;text-align:center;white-space:normal;color:#222;font-size:15px;line-height:16.5px">Emotions</div>
<div class="a" style="left:413.5px;top:755px;width:102.5px;height:108.0px;background:#b87de2"></div>
<div class="a" style="left:413.5px;top:755px;width:102.5px;height:108.0px;display:flex;align-items:center;justify-content:center;text-align:center;white-space:normal;color:#222;font-size:13px;line-height:14.3px">Compliance<br>- Fee<br>Disclosure</div>
<div class="a" style="left:517.8px;top:639px;width:91.8px;height:115.0px;background:#a950ea"></div>
<div class="a" style="left:517.8px;top:639px;width:91.8px;height:115.0px;display:flex;align-items:center;justify-content:center;text-align:center;white-space:normal;color:#222;font-size:17px;line-height:18.7px">Moving</div>
<div class="a" style="left:517.8px;top:756px;width:91.8px;height:107.0px;background:#b57be2"></div>
<div class="a" style="left:517.8px;top:756px;width:91.8px;height:107.0px;display:flex;align-items:center;justify-content:center;text-align:center;white-space:normal;color:#222;font-size:14px;line-height:15.4px">Customer<br>Retention</div>
<div class="a" style="left:611.6px;top:639px;width:84.9px;height:116.6px;background:#b87de2"></div>
<div class="a" style="left:611.6px;top:639px;width:84.9px;height:116.6px;display:flex;align-items:center;justify-content:center;text-align:center;white-space:normal;color:#222;font-size:14.5px;line-height:16.0px">Website<br>Portal</div>
<div class="a" style="left:611.6px;top:757.5px;width:84.9px;height:105.5px;background:#b87de2"></div>
<div class="a" style="left:611.6px;top:757.5px;width:84.9px;height:105.5px;display:flex;align-items:center;justify-content:center;text-align:center;white-space:normal;color:#222;font-size:14px;line-height:15.4px">Internet<br>Services</div>
<div class="a" style="left:698.4px;top:639px;width:107.0px;height:83.0px;background:#b87de2"></div>
<div class="a" style="left:698.4px;top:639px;width:107.0px;height:83.0px;display:flex;align-items:center;justify-content:center;text-align:center;white-space:normal;color:#222;font-size:13.5px;line-height:14.9px">Repeat<br>Interactions</div>
<div class="a" style="left:698.4px;top:724px;width:107.0px;height:70.5px;background:#b06ae2"></div>
<div class="a" style="left:698.4px;top:724px;width:107.0px;height:70.5px;display:flex;align-items:center;justify-content:center;text-align:center;white-space:normal;color:#222;font-size:13.5px;line-height:14.9px">Mobile Plan</div>
<div class="a" style="left:698.4px;top:796.5px;width:107.0px;height:66.5px;background:#b87de2"></div>
<div class="a" style="left:698.4px;top:797.5px;width:107.0px;height:66.5px;display:flex;align-items:center;justify-content:center;text-align:center;white-space:normal;color:#222;font-size:13.5px;line-height:14.9px">Confusion</div>
<div class="a" style="left:806.8px;top:639px;width:75.8px;height:92.0px;background:#a752e8"></div>
<div class="a" style="left:806.8px;top:639px;width:75.8px;height:92.0px;display:flex;align-items:center;justify-content:center;text-align:center;white-space:normal;color:#222;font-size:13.5px;line-height:14.9px">Cancel<br>Account</div>
<div class="a" style="left:884px;top:639px;width:66.0px;height:92.0px;background:#b87de2"></div>
<div class="a" style="left:884px;top:640.4px;width:66.0px;height:92.0px;display:flex;align-items:center;justify-content:center;text-align:center;white-space:normal;color:#222;font-size:12px;line-height:13.2px">&#8226; &#8226; &#8226;</div>
<div class="a" style="left:951.8px;top:639px;width:64.5px;height:92.0px;background:#b06fe2"></div>
<div class="a" style="left:951.8px;top:639px;width:64.5px;height:92.0px;display:flex;align-items:center;justify-content:center;text-align:center;white-space:normal;color:#222;font-size:9.5px;line-height:10.5px">Strong<br>Sales<br>Language</div>
<div class="a" style="left:806.8px;top:733px;width:87.4px;height:66.8px;background:#a752e8"></div>
<div class="a" style="left:806.8px;top:733px;width:87.4px;height:66.8px;display:flex;align-items:center;justify-content:center;text-align:center;white-space:normal;color:#222;font-size:10px;line-height:11.0px">Address<br>Change</div>
<div class="a" style="left:806.8px;top:801px;width:87.4px;height:62.0px;background:#b06fe2"></div>
<div class="a" style="left:806.8px;top:801px;width:87.4px;height:62.0px;display:flex;align-items:center;justify-content:center;text-align:center;white-space:normal;color:#222;font-size:13.5px;line-height:14.9px">Cable TV</div>
<div class="a" style="left:895.6px;top:733px;width:60.1px;height:93.0px;background:#b06fe2"></div>
<div class="a" style="left:895.6px;top:733px;width:60.1px;height:93.0px;display:flex;align-items:center;justify-content:center;text-align:center;white-space:normal;color:#222;font-size:10px;line-height:11.0px">Channel<br>Hopping</div>
<div class="a" style="left:957.6px;top:733px;width:58.7px;height:93.0px;background:#b57be2"></div>
<div class="a" style="left:957.6px;top:733px;width:58.7px;height:93.0px;display:flex;align-items:center;justify-content:center;text-align:center;white-space:normal;color:#222;font-size:11.5px;line-height:11.9px">Pos<br>sent -<br>end of<br>call</div>
<div class="a" style="left:895.6px;top:828px;width:120.7px;height:38.0px;background:#a338ea"></div>
<div class="a" style="left:895.6px;top:830.5px;width:120.7px;height:38.0px;display:flex;align-items:center;justify-content:center;text-align:center;white-space:normal;color:#222;font-size:9px;line-height:9.9px">&#8226; &#8226; &#8226;</div>
<div class="a" style="left:1059.5px;top:606.42px;font-size:12.5px;line-height:12.5px;color:#444;font-weight:normal;">Effort by TouchPont</div>
<div class="a" style="left:1058.5px;top:629px;width:391px;height:173.5px;border:1.6px solid #78a0f4;border-radius:8px;background:#fafafa"></div>
<div class="a" style="left:1197.5px;top:635.5px;width:1.0px;height:125.0px;background:#e2e2e2;"></div>
<div class="a" style="left:186.29999999999995px;width:1000px;text-align:right;top:651.57px;font-size:9.6px;line-height:9.6px;color:#3040ee;font-weight:normal;">Other:</div>
<div class="a" style="left:186.29999999999995px;width:1000px;text-align:right;top:665.37px;font-size:9.6px;line-height:9.6px;color:#3040ee;font-weight:normal;">Contact customer support</div>
<div class="a" style="left:186.29999999999995px;width:1000px;text-align:right;top:679.37px;font-size:9.6px;line-height:9.6px;color:#3040ee;font-weight:normal;">Very Low</div>
<div class="a" style="left:186.29999999999995px;width:1000px;text-align:right;top:694.17px;font-size:9.6px;line-height:9.6px;color:#3040ee;font-weight:normal;">Low</div>
<div class="a" style="left:186.29999999999995px;width:1000px;text-align:right;top:707.57px;font-size:9.6px;line-height:9.6px;color:#3040ee;font-weight:normal;">View my account/stateme...</div>
<div class="a" style="left:186.29999999999995px;width:1000px;text-align:right;top:721.67px;font-size:9.6px;line-height:9.6px;color:#3040ee;font-weight:normal;">High</div>
<div class="a" style="left:186.29999999999995px;width:1000px;text-align:right;top:735.17px;font-size:9.6px;line-height:9.6px;color:#3040ee;font-weight:normal;">Very High</div>
<div class="a" style="left:1214px;top:768.5px;width:229px;height:1.0px;background:#e0e0e0;"></div>
<div class="a" style="left:1218px;top:775.96px;font-size:9.5px;line-height:9.5px;color:#3040ee;font-weight:normal;">Very</div>
<div class="a" style="left:1218px;top:786.46px;font-size:9.5px;line-height:9.5px;color:#3040ee;font-weight:normal;">High</div>
<div class="a" style="left:782.9000000000001px;width:1000px;text-align:center;top:775.96px;font-size:9.5px;line-height:9.5px;color:#3040ee;font-weight:normal;">High</div>
<div class="a" style="left:828.5px;width:1000px;text-align:center;top:775.96px;font-size:9.5px;line-height:9.5px;color:#3040ee;font-weight:normal;">Neutral</div>
<div class="a" style="left:874.3px;width:1000px;text-align:center;top:775.96px;font-size:9.5px;line-height:9.5px;color:#3040ee;font-weight:normal;">Low</div>
<div class="a" style="left:1401.3px;top:775.96px;font-size:9.5px;line-height:9.5px;color:#3040ee;font-weight:normal;">Very</div>
<div class="a" style="left:1401.3px;top:786.46px;font-size:9.5px;line-height:9.5px;color:#3040ee;font-weight:normal;">Low</div>
<svg style="left:0;top:0" width="1596" height="1000" viewBox="0 0 1596 1000"><circle cx="1236.4" cy="656.4" r="8.5" fill="#b8f2b8" fill-opacity="0.72" stroke="#b8f2b8" stroke-opacity="1" stroke-width="1.1"/><circle cx="1236.4" cy="670.2" r="9" fill="#5a9ef0" fill-opacity="0.72" stroke="#5a9ef0" stroke-opacity="1" stroke-width="1.1"/><circle cx="1236.4" cy="684.2" r="13.5" fill="#88eeff" fill-opacity="0.72" stroke="#88eeff" stroke-opacity="1" stroke-width="1.1"/><circle cx="1236.4" cy="699" r="11.5" fill="#ffff55" fill-opacity="0.72" stroke="#ffff55" stroke-opacity="1" stroke-width="1.1"/><circle cx="1236.4" cy="712.4" r="9" fill="#ffe3cc" fill-opacity="0.72" stroke="#ffe3cc" stroke-opacity="1" stroke-width="1.1"/><circle cx="1236.4" cy="726.5" r="13" fill="#ffb45a" fill-opacity="0.72" stroke="#ffb45a" stroke-opacity="1" stroke-width="1.1"/><circle cx="1236.4" cy="740" r="11.5" fill="#ff5040" fill-opacity="0.72" stroke="#ff5040" stroke-opacity="1" stroke-width="1.1"/><circle cx="1282.9" cy="656.4" r="8" fill="#5f82a8" fill-opacity="0.72" stroke="#5f82a8" stroke-opacity="1" stroke-width="1.1"/><circle cx="1282.9" cy="670.2" r="5.5" fill="#7799aa" fill-opacity="0.72" stroke="#7799aa" stroke-opacity="1" stroke-width="1.1"/><circle cx="1282.9" cy="684.2" r="8.2" fill="#aaa655" fill-opacity="0.72" stroke="#aaa655" stroke-opacity="1" stroke-width="1.1"/><circle cx="1282.9" cy="699" r="8.3" fill="#ab9a88" fill-opacity="0.72" stroke="#ab9a88" stroke-opacity="1" stroke-width="1.1"/><circle cx="1282.9" cy="712.4" r="3.5" fill="#a88850" fill-opacity="0.72" stroke="#a88850" stroke-opacity="1" stroke-width="1.1"/><circle cx="1282.9" cy="726.5" r="9.8" fill="#a05c40" fill-opacity="0.72" stroke="#a05c40" stroke-opacity="1" stroke-width="1.1"/><circle cx="1282.9" cy="740" r="7.8" fill="#66ee44" fill-opacity="0.72" stroke="#66ee44" stroke-opacity="1" stroke-width="1.1"/><circle cx="1328.5" cy="656.4" r="7" fill="#aaf0ff" fill-opacity="0.72" stroke="#aaf0ff" stroke-opacity="1" stroke-width="1.1"/><circle cx="1328.5" cy="670.2" r="5.5" fill="#ffff77" fill-opacity="0.72" stroke="#ffff77" stroke-opacity="1" stroke-width="1.1"/><circle cx="1328.5" cy="684.2" r="8.5" fill="#ffe3d3" fill-opacity="0.72" stroke="#ffe3d3" stroke-opacity="1" stroke-width="1.1"/><circle cx="1328.5" cy="699" r="9" fill="#ffcc88" fill-opacity="0.72" stroke="#ffcc88" stroke-opacity="1" stroke-width="1.1"/><circle cx="1328.5" cy="712.4" r="7.5" fill="#ff9a88" fill-opacity="0.72" stroke="#ff9a88" stroke-opacity="1" stroke-width="1.1"/><circle cx="1328.5" cy="726.5" r="9.5" fill="#569e44" fill-opacity="0.72" stroke="#569e44" stroke-opacity="1" stroke-width="1.1"/><circle cx="1328.5" cy="740" r="9" fill="#74a874" fill-opacity="0.72" stroke="#74a874" stroke-opacity="1" stroke-width="1.1"/><circle cx="1373.7" cy="656.4" r="7.5" fill="#ffee44" fill-opacity="0.72" stroke="#ffee44" stroke-opacity="1" stroke-width="1.1"/><circle cx="1373.7" cy="670.2" r="7" fill="#ffe3c6" fill-opacity="0.72" stroke="#ffe3c6" stroke-opacity="1" stroke-width="1.1"/><circle cx="1373.7" cy="684.2" r="7.5" fill="#ffbb55" fill-opacity="0.72" stroke="#ffbb55" stroke-opacity="1" stroke-width="1.1"/><circle cx="1373.7" cy="699" r="7" fill="#ff6450" fill-opacity="0.72" stroke="#ff6450" stroke-opacity="1" stroke-width="1.1"/><circle cx="1373.7" cy="712.4" r="8" fill="#aaff88" fill-opacity="0.72" stroke="#aaff88" stroke-opacity="1" stroke-width="1.1"/><circle cx="1373.7" cy="726.5" r="9" fill="#ddffdd" fill-opacity="0.72" stroke="#ddffdd" stroke-opacity="1" stroke-width="1.1"/><circle cx="1373.7" cy="740" r="8.5" fill="#aaccff" fill-opacity="0.72" stroke="#aaccff" stroke-opacity="1" stroke-width="1.1"/><circle cx="1419.9" cy="656.4" r="8" fill="#bba899" fill-opacity="0.72" stroke="#bba899" stroke-opacity="1" stroke-width="1.1"/><circle cx="1419.9" cy="670.2" r="10" fill="#a88455" fill-opacity="0.72" stroke="#a88455" stroke-opacity="1" stroke-width="1.1"/><circle cx="1419.9" cy="684.2" r="11" fill="#9a5233" fill-opacity="0.72" stroke="#9a5233" stroke-opacity="1" stroke-width="1.1"/><circle cx="1419.9" cy="699" r="11" fill="#77ee44" fill-opacity="0.72" stroke="#77ee44" stroke-opacity="1" stroke-width="1.1"/><circle cx="1419.9" cy="712.4" r="10.5" fill="#c8f0c8" fill-opacity="0.72" stroke="#c8f0c8" stroke-opacity="1" stroke-width="1.1"/><circle cx="1419.9" cy="726.5" r="10.5" fill="#5599ee" fill-opacity="0.72" stroke="#5599ee" stroke-opacity="1" stroke-width="1.1"/><circle cx="1419.9" cy="740" r="10" fill="#88eeff" fill-opacity="0.72" stroke="#88eeff" stroke-opacity="1" stroke-width="1.1"/></svg>
<div class="a" style="left:1447px;top:625px;width:25px;height:181px;background:#fff;"></div>
</div></div></body></html>
